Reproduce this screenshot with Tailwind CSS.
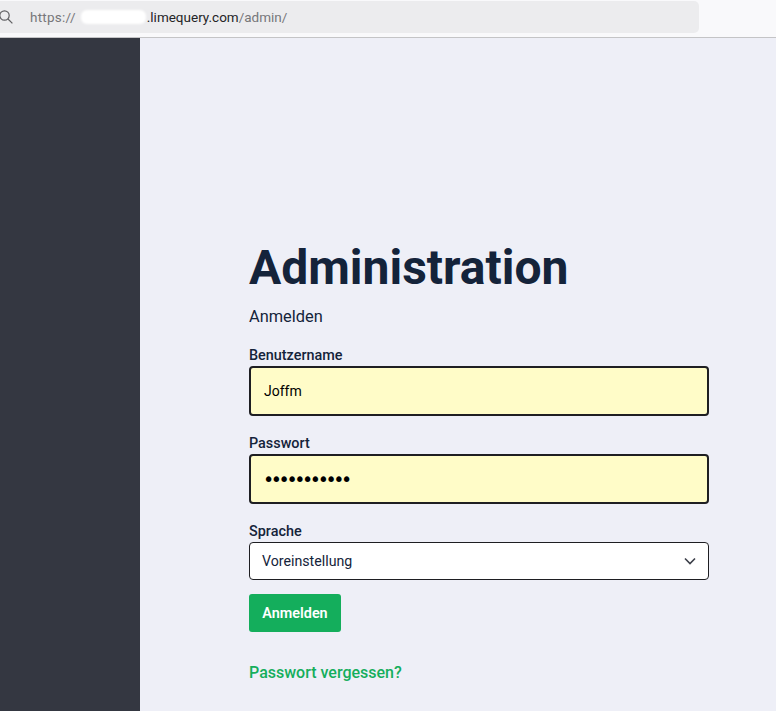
<!DOCTYPE html>
<html lang="de">
  <head>
    <meta charset="UTF-8" />
    <meta name="viewport" content="width=device-width, initial-scale=1.0" />
    <title>Administration</title>
    <script src="https://cdn.jsdelivr.net/npm/@tailwindcss/browser@4"></script>
  </head>
  <body class="h-[711px] overflow-hidden bg-[#eeeff7] font-['Roboto',sans-serif] text-[#14233a]">
    <!-- Browser bar -->
    <div class="h-[38px] bg-[#f9f9fb] border-b border-[#c4c4c6] pt-px">
      <div class="w-[699px] h-[32px] bg-[#ececee] rounded-r-[5px] flex items-center text-[13.5px] text-[#77777a]">
        <svg class="w-[14px] h-[14px] -ml-px" viewBox="0 0 14 14" fill="none" stroke="#5f5f62" stroke-width="1.2">
          <circle cx="5.5" cy="5.5" r="4.7" />
          <path d="M9 9l4.4 4.4" />
        </svg>
        <span class="ml-[17px] tracking-[0.25px]">https://</span>
        <span class="ml-[5px] w-[65px] h-[14px] bg-white rounded-[6px] blur-[1px]"></span>
        <span class="ml-px text-[#242426]">.limequery.com</span><span>/admin/</span>
      </div>
    </div>

    <div class="flex h-[673px]">
      <!-- Sidebar -->
      <div class="w-[140px] bg-[#343741]"></div>

      <!-- Login -->
      <div class="pl-[109px] w-[569px] pt-[201px]">
        <h1 class="text-[48px] leading-[58px] font-bold">Administration</h1>
        <p class="mt-[8px] text-[16.4px] leading-[24px]">Anmelden</p>

        <form class="mt-[16px]">
          <label class="block h-[20px] text-[14.4px] leading-[22px] font-medium">Benutzername</label>
          <input type="text" value="Joffm" class="block mt-px w-[460px] h-[50px] px-[13px] bg-[#fffcc8] border-2 border-[#1e1e22] rounded-[4px] text-[14px] text-black outline-none" />

          <label class="block h-[20px] mt-[17px] text-[14.4px] leading-[22px] font-medium">Passwort</label>
          <input type="password" value="joffmsecret" class="block mt-px w-[460px] h-[50px] px-[12px] bg-[#fffcc8] border-2 border-[#1e1e22] rounded-[4px] font-['DejaVu_Sans'] text-[19px] tracking-[-3.4px] text-black outline-none" />

          <label class="block h-[20px] mt-[17px] text-[14.4px] leading-[22px] font-medium">Sprache</label>
          <div class="relative mt-px w-[460px] h-[38px] px-[12px] pt-[2px] flex items-center bg-white border border-[#1e1e22] rounded-[4px] text-[14.2px]">
            Voreinstellung
            <svg class="absolute right-[12px] top-[14px] w-[12px] h-[9px]" viewBox="0 0 12 9" fill="none" stroke="#3c3f49" stroke-width="1.6">
              <path d="M1 1.5l5 5 5-5" />
            </svg>
          </div>

          <button type="button" class="block mt-[14px] w-[92px] h-[38px] pt-px bg-[#14ae5c] rounded-[3px] text-white text-[14.4px] font-semibold">Anmelden</button>
        </form>

        <a href="#" class="block mt-[29px] text-[16px] leading-[24px] font-medium text-[#14ae5c]">Passwort vergessen?</a>
      </div>
    </div>
  </body>
</html>
